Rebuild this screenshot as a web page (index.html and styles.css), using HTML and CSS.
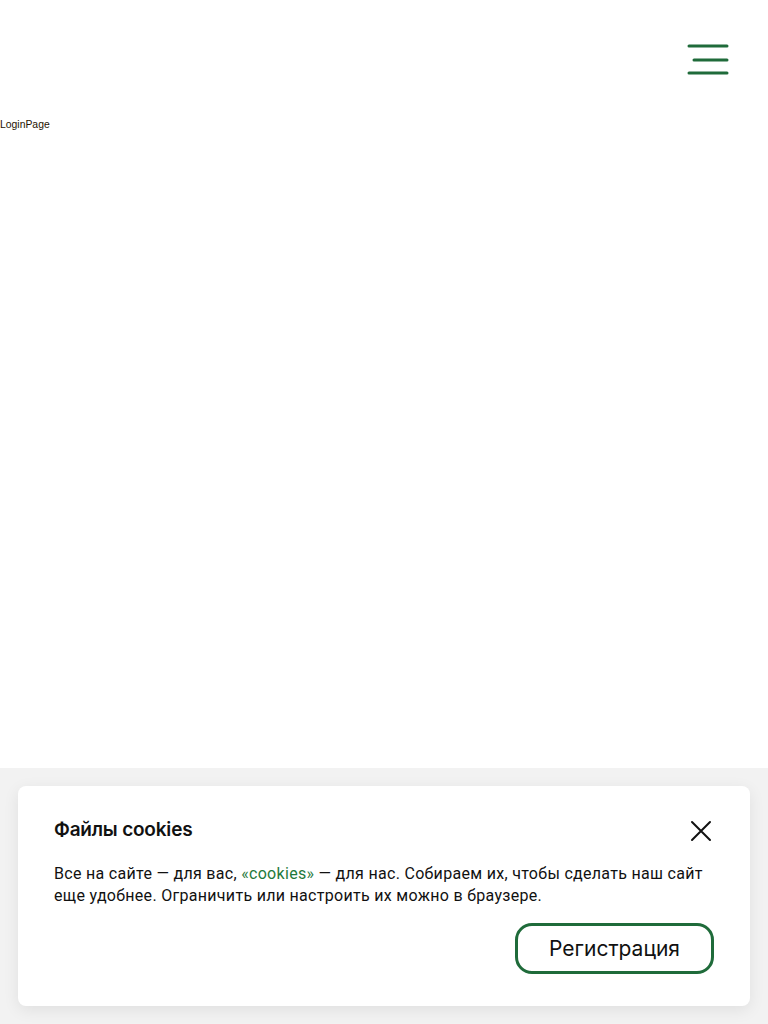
FILE: index.html
```html
<!DOCTYPE html>
<html lang="ru">
<head>
<meta charset="utf-8">
<title>LoginPage</title>
<link rel="stylesheet" href="styles.css">
</head>
<body>
<header class="header">
  <button class="burger" aria-label="Меню">
    <svg width="42" height="32" viewBox="0 0 42 32">
      <path d="M2 2H40M7 16H40M2 29H40" stroke="#1f6b3a" stroke-width="3" stroke-linecap="round" fill="none"/>
    </svg>
  </button>
</header>
<main class="main">
  <div class="page-label">LoginPage</div>
</main>
<div class="cookie-overlay">
  <div class="cookie-card">
    <div class="cookie-head">
      <h2 class="cookie-title">Файлы cookies</h2>
      <button class="cookie-close" aria-label="Закрыть">
        <svg width="22" height="22" viewBox="0 0 22 22">
          <path d="M2 2L20 20M20 2L2 20" stroke="#111" stroke-width="2" stroke-linecap="round" fill="none"/>
        </svg>
      </button>
    </div>
    <p class="cookie-text">Все на сайте — для вас, <a class="cookie-link" href="#">«cookies»</a> — для нас. Собираем их, чтобы сделать наш сайт еще удобнее. Ограничить или настроить их можно в браузере.</p>
    <div class="cookie-actions">
      <button class="cookie-btn">Регистрация</button>
    </div>
  </div>
</div>
</body>
</html>
```
FILE: styles.css
```css
* { box-sizing: border-box; }
html, body { margin: 0; padding: 0; background: #fff; }
body { font-family: "Roboto", "Inter", sans-serif; color: #111; }

.header {
  height: 114px;
  display: flex;
  justify-content: flex-end;
  align-items: flex-start;
  padding: 44px 39px 0 0;
}
.burger {
  border: 0;
  background: none;
  padding: 0;
  width: 42px;
  height: 32px;
  cursor: pointer;
}
.burger svg { display: block; }

.main { padding: 0; }
.page-label {
  font-family: "Liberation Sans", Arial, sans-serif;
  font-size: 10.4px;
  line-height: 13px;
  color: #261400;
  padding-top: 4px;
}

.cookie-overlay {
  position: fixed;
  left: 0;
  right: 0;
  bottom: 0;
  height: 256px;
  background: #f2f2f2;
  padding: 18px;
}
.cookie-card {
  background: #fff;
  border-radius: 8px;
  box-shadow: 0 4px 16px rgba(0,0,0,0.08);
  height: 220px;
  padding: 31px 36px 0 36px;
}
.cookie-head {
  display: flex;
  justify-content: space-between;
  align-items: center;
}
.cookie-title {
  margin: 0;
  font-family: "Inter", sans-serif;
  font-size: 19px;
  line-height: 26px;
  font-weight: 600;
  letter-spacing: -0.2px;
  color: #111;
}
.cookie-close {
  border: 0;
  background: none;
  padding: 0;
  width: 22px;
  height: 22px;
  margin-top: 2px;
  margin-right: 2px;
  cursor: pointer;
}
.cookie-close svg { display: block; }
.cookie-text {
  margin: 20px 0 0 0;
  font-size: 16px;
  line-height: 22px;
  letter-spacing: 0.3px;
  color: #111;
  max-width: 664px;
}
.cookie-link { color: #1f7a3c; text-decoration: none; }
.cookie-actions {
  display: flex;
  justify-content: flex-end;
  margin-top: 16px;
}
.cookie-btn {
  font-family: "Inter", sans-serif;
  font-size: 21px;
  color: #111;
  background: #fff;
  border: 3px solid #1f6b3a;
  border-radius: 17px;
  width: 199px;
  height: 51px;
  padding: 0;
  cursor: pointer;
}
```
